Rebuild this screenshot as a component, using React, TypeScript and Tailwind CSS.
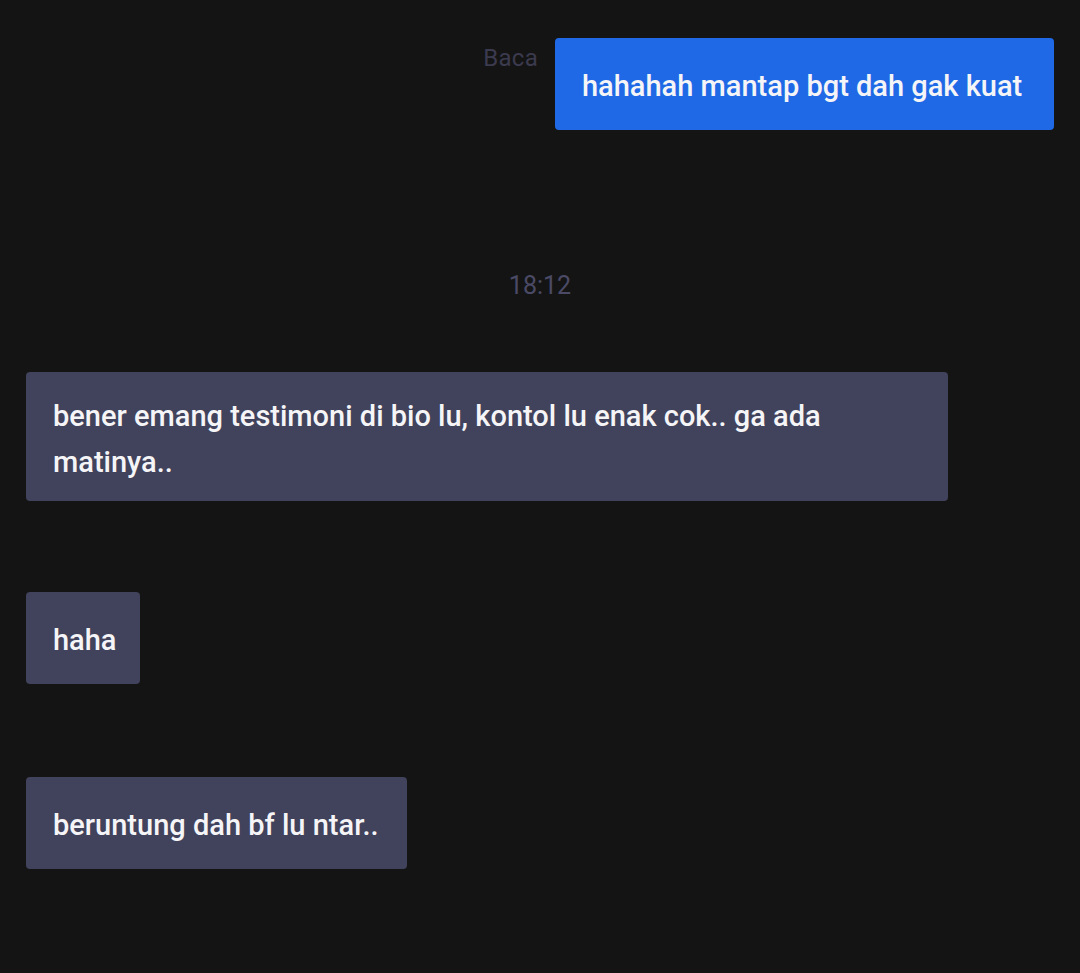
import React from "react";

type Msg = {
  id: number;
  text: string;
  width: string;
  pad: string;
  gap: string;
};

// incoming messages, in order, below the time marker
const incoming: Msg[] = [
  {
    id: 1,
    text: "bener emang testimoni di bio lu, kontol lu enak cok.. ga ada matinya..",
    width: "w-[922px]",
    pad: "pt-[21px] pb-[16px]",
    gap: "mt-[70px]",
  },
  { id: 2, text: "haha", width: "w-[114px]", pad: "pt-[25px] pb-[21px]", gap: "mt-[91px]" },
  {
    id: 3,
    text: "beruntung dah bf lu ntar..",
    width: "w-[381px]",
    pad: "pt-[25px] pb-[21px]",
    gap: "mt-[93px]",
  },
];

export default function App() {
  return (
    <div
      className="min-h-screen w-full bg-[#141414] px-[26px] pt-[38px] text-[#f5f5f7]"
      style={{ fontFamily: "Roboto, 'Liberation Sans', sans-serif" }}
    >
      {/* Outgoing */}
      <div className="flex justify-end items-start gap-[17px]">
        <span className="mt-[4px] text-[24px] leading-[32px] tracking-[0.3px] text-[#3b3a4e]">Baca</span>
        <div className="w-[499px] rounded-[4px] bg-[#1f69e6] px-[27px] pt-[25px] pb-[21px] text-[29px] font-medium leading-[46px] whitespace-nowrap">
          hahahah mantap bgt dah gak kuat
        </div>
      </div>

      {/* Time marker */}
      <div className="mt-[140px] text-center text-[25px] leading-[32px] text-[#4b4a66]">18:12</div>

      {/* Incoming */}
      {incoming.map((m) => (
        <div
          key={m.id}
          className={`${m.gap} ${m.width} ${m.pad} rounded-[4px] bg-[#41425b] px-[27px] text-[29px] font-medium leading-[46px]`}
        >
          {m.text}
        </div>
      ))}
    </div>
  );
}
